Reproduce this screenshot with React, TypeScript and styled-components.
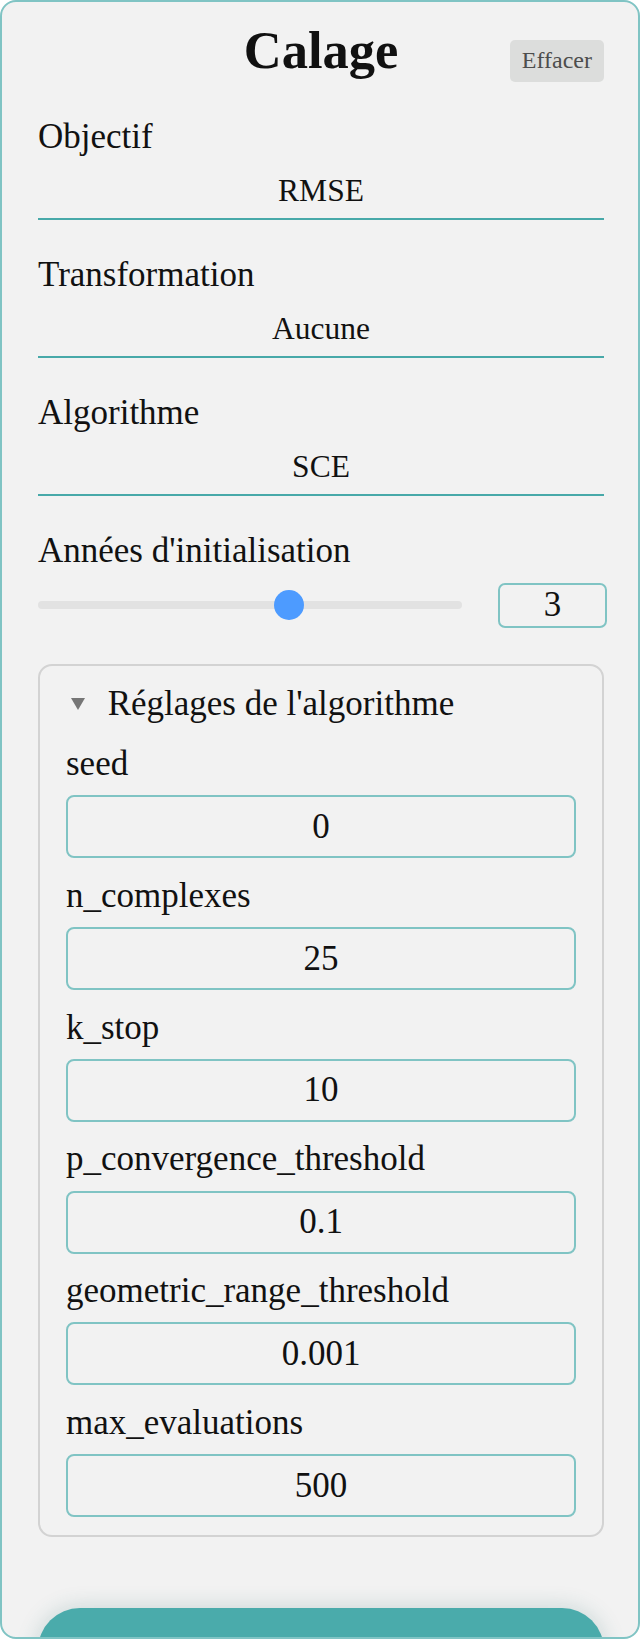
import * as React from 'react';
import styled, { createGlobalStyle } from 'styled-components';

const GlobalStyle = createGlobalStyle`
  body {
    margin: 0;
    background: #ffffff;
    font-family: "Liberation Serif", "Times New Roman", serif;
    color: #111111;
  }
`;

const Panel = styled.section`
  box-sizing: border-box;
  width: 640px;
  height: 1639px;
  border: 2px solid #80c4c4;
  border-radius: 16px;
  background: #f2f2f2;
  padding: 18px 34px 0 36px;
  overflow: hidden;
`;

const Header = styled.header`
  display: grid;
  grid-template-columns: 1fr auto 1fr;
  align-items: baseline;
`;

const Title = styled.h1`
  grid-column: 2;
  margin: 0;
  font-size: 52.5px;
  line-height: 1.15;
  font-weight: 700;
`;

const ClearButton = styled.button`
  grid-column: 3;
  justify-self: end;
  display: inline-flex;
  align-items: center;
  box-sizing: border-box;
  height: 42px;
  padding: 0 12px;
  border: none;
  border-radius: 5px;
  background: #dcdddc;
  color: #4d4d4d;
  font-family: inherit;
  font-size: 24px;
  line-height: 1.15;
`;

const Field = styled.div`
  display: flex;
  flex-direction: column;
  margin-top: 35px;
`;

const Label = styled.label<{ $space: number }>`
  font-size: 35px;
  line-height: 1.15;
  margin-bottom: ${({ $space }) => $space}px;
`;

const Select = styled.select`
  appearance: none;
  box-sizing: border-box;
  width: 100%;
  height: 54.7px;
  padding: 8px 0 8.5px;
  border: none;
  border-bottom: 2px solid #48a9a9;
  border-radius: 0;
  background: transparent;
  color: #111111;
  font-family: inherit;
  font-size: 31.5px;
  line-height: 1.15;
  text-align: center;
  text-align-last: center;
`;

const SliderRow = styled.div`
  display: grid;
  grid-template-columns: 424px 109px;
  column-gap: 36px;
  align-items: center;
  margin-top: 12px;
`;

const Track = styled.div`
  position: relative;
  height: 8px;
  border-radius: 4px;
  background: #e2e2e2;
`;

const Thumb = styled.span`
  position: absolute;
  top: 50%;
  width: 30px;
  height: 30px;
  margin: -15px 0 0 -15px;
  border-radius: 50%;
  background: #4d9bff;
`;

const NumberBox = styled.input`
  box-sizing: border-box;
  width: 109px;
  height: 45px;
  border: 2px solid #80c4c4;
  border-radius: 7px;
  background: transparent;
  color: #111111;
  font-family: inherit;
  font-size: 35px;
  text-align: center;
  padding: 0;
`;

const Settings = styled.details`
  box-sizing: border-box;
  margin-top: 36px;
  border: 2px solid #d3d3d3;
  border-radius: 14px;
  padding: 18px 26px 17.5px;
`;

const Summary = styled.summary`
  display: flex;
  align-items: center;
  list-style: none;
  padding-left: 4.7px;
  font-size: 35px;
  line-height: 1.15;
  &::-webkit-details-marker {
    display: none;
  }
`;

const Marker = styled.span`
  width: 0;
  height: 0;
  margin-right: 23px;
  border-left: 7px solid transparent;
  border-right: 7px solid transparent;
  border-top: 12px solid #767676;
`;

const Setting = styled.div<{ $first: boolean }>`
  display: flex;
  flex-direction: column;
  margin-top: ${({ $first }) => ($first ? 20 : 17.5)}px;
`;

const SettingInput = styled.input`
  box-sizing: border-box;
  width: 100%;
  height: 63px;
  border: 2px solid #80c4c4;
  border-radius: 8px;
  background: transparent;
  color: #111111;
  font-family: inherit;
  font-size: 35px;
  text-align: center;
  padding: 0;
`;

const RunButton = styled.button`
  display: block;
  box-sizing: border-box;
  width: 100%;
  height: 90px;
  margin-top: 71px;
  border: none;
  border-radius: 42px;
  background: #4aabab;
  box-shadow: 0 0 22px rgba(40, 110, 110, 0.22);
`;

const selects = [
  { label: 'Objectif', value: 'RMSE' },
  { label: 'Transformation', value: 'Aucune' },
  { label: 'Algorithme', value: 'SCE' },
];

const algoSettings = [
  { name: 'seed', value: '0' },
  { name: 'n_complexes', value: '25' },
  { name: 'k_stop', value: '10' },
  { name: 'p_convergence_threshold', value: '0.1' },
  { name: 'geometric_range_threshold', value: '0.001' },
  { name: 'max_evaluations', value: '500' },
];

const WARMUP_MIN = 0;
const WARMUP_MAX = 5;

export default function App() {
  const warmup = 3;
  const ratio = (warmup - WARMUP_MIN) / (WARMUP_MAX - WARMUP_MIN);

  return (
    <>
      <GlobalStyle />
      <Panel>
        <Header>
          <Title>Calage</Title>
          <ClearButton type="button">Effacer</ClearButton>
        </Header>

        {selects.map((s) => (
          <Field key={s.label}>
            <Label $space={8}>{s.label}</Label>
            <Select defaultValue={s.value}>
              <option value={s.value}>{s.value}</option>
            </Select>
          </Field>
        ))}

        <Field>
          <Label $space={0}>Années d'initialisation</Label>
          <SliderRow>
            <Track>
              <Thumb style={{ left: `calc(15px + ${ratio} * (100% - 30px))` }} />
            </Track>
            <NumberBox type="text" defaultValue={String(warmup)} />
          </SliderRow>
        </Field>

        <Settings open>
          <Summary>
            <Marker />
            Réglages de l'algorithme
          </Summary>
          {algoSettings.map((p, i) => (
            <Setting key={p.name} $first={i === 0}>
              <Label $space={11}>{p.name}</Label>
              <SettingInput type="text" defaultValue={p.value} />
            </Setting>
          ))}
        </Settings>

        <RunButton type="button" aria-label="Lancer le calage" />
      </Panel>
    </>
  );
}
